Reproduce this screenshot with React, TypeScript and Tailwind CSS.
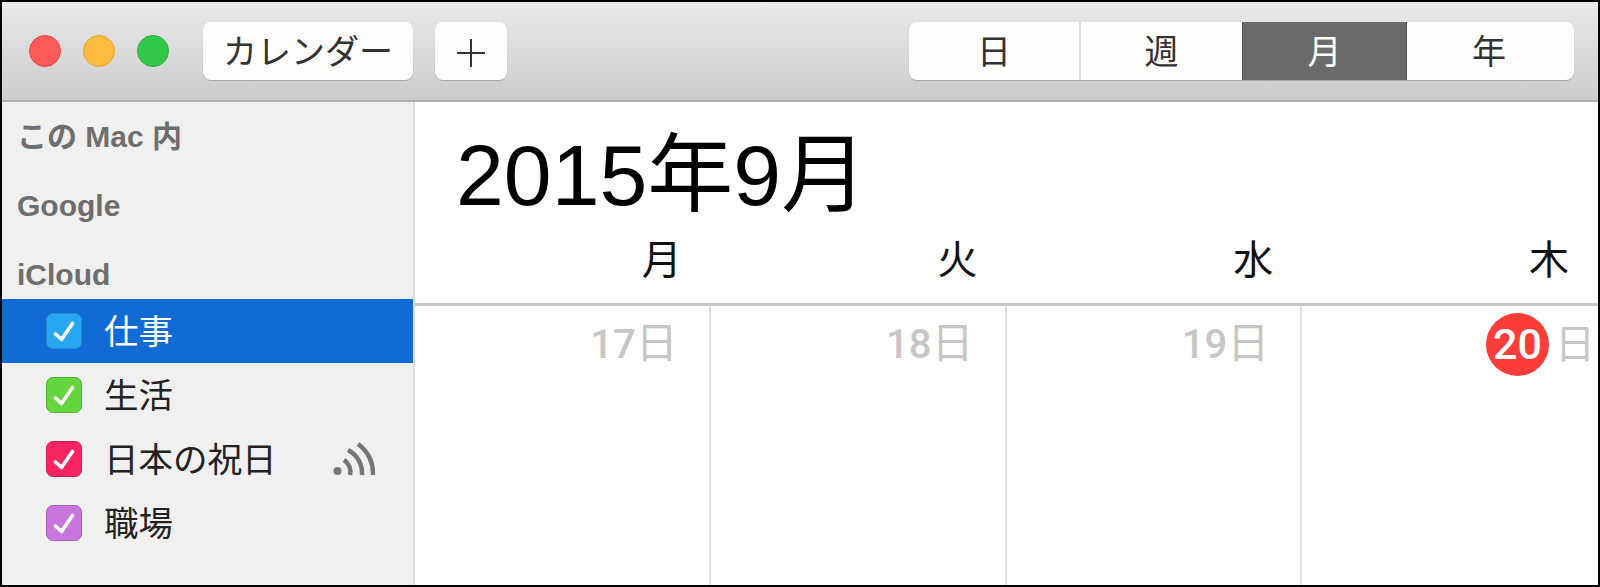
const font = { fontFamily: '"Liberation Sans", "Noto Sans CJK JP", sans-serif' };
const numFont = { fontFamily: 'Roboto, "Liberation Sans", sans-serif' };

const calendars = [
  { name: "仕事", box: "bg-[#27a7f2] border-[#1f8fd6]", selected: true },
  { name: "生活", box: "bg-[#66d640] border-[#4fb32e]" },
  { name: "日本の祝日", box: "bg-[#f92562] border-[#d81e52]", rss: true },
  { name: "職場", box: "bg-[#c876de] border-[#a95fc0]" },
];

const days = [
  { head: "月", num: "17" },
  { head: "火", num: "18" },
  { head: "水", num: "19" },
  { head: "木", num: "20", today: true },
];

function Light({ className }: { className: string }) {
  return <div className={`w-8 h-8 rounded-full border ${className}`} />;
}

function Check() {
  return (
    <svg width="24" height="24" viewBox="0 0 24 24" fill="none" stroke="white" strokeWidth="3.6" strokeLinecap="round" strokeLinejoin="round">
      <polyline points="3.5,15 9.5,20.5 20.5,4.5" />
    </svg>
  );
}

function Rss() {
  return (
    <svg width="42" height="34" viewBox="0 0 42 34" fill="none" stroke="#757575" strokeWidth="4.5">
      <circle cx="4.5" cy="29" r="4" fill="#757575" stroke="none" />
      <path d="M11 18a14 14 0 0 1 6 15" />
      <path d="M15 8a26 26 0 0 1 14 25" />
      <path d="M25 2a36 36 0 0 1 15 31" />
    </svg>
  );
}

export default function App() {
  return (
    <div className="w-[1600px] h-[587px] border-2 border-black flex flex-col overflow-hidden bg-white" style={font}>
      {/* Toolbar */}
      <div className="h-[100px] shrink-0 flex items-start pt-[20px] pl-[27px] pr-[24px] bg-gradient-to-b from-[#e9e9e9] to-[#cccccc] border-b-2 border-[#b0b0b0]">
        <div className="flex gap-[22px] mt-[13px]">
          <Light className="bg-[#fc5b57] border-[#e5443f]" />
          <Light className="bg-[#fdbc40] border-[#e5a52f]" />
          <Light className="bg-[#34c84a] border-[#2aac3c]" />
        </div>
        <button className="ml-[34px] w-[210px] h-[58px] pt-[3px] bg-[#fdfdfd] rounded-lg shadow-[0_1px_1px_rgba(0,0,0,0.2)] text-[34px] text-[#333] flex items-center justify-center">
          カレンダー
        </button>
        <button className="ml-[22px] w-[72px] h-[58px] pt-[3px] bg-[#fdfdfd] rounded-lg shadow-[0_1px_1px_rgba(0,0,0,0.2)] flex items-center justify-center">
          <svg width="30" height="30" viewBox="0 0 30 30" stroke="#333" strokeWidth="2">
            <path d="M15 1v28M1 15h28" />
          </svg>
        </button>
        <div className="ml-auto w-[665px] h-[58px] flex bg-[#fdfdfd] rounded-lg shadow-[0_1px_1px_rgba(0,0,0,0.2)] text-[34px] text-[#333] overflow-hidden">
          <div className="w-[172px] pt-[3px] flex items-center justify-center border-r-2 border-[#dedede]">日</div>
          <div className="w-[161px] pt-[3px] flex items-center justify-center">週</div>
          <div className="w-[165px] pt-[3px] flex items-center justify-center bg-[#6b6b6b] text-white border-x border-[#555]">月</div>
          <div className="flex-1 pt-[3px] pr-[3px] flex items-center justify-center">年</div>
        </div>
      </div>

      <div className="flex-1 flex min-h-0">
        {/* Sidebar */}
        <div className="w-[413px] shrink-0 bg-[#f0f0f0] border-r-2 border-[#dedede] flex flex-col">
          <div className="flex flex-col gap-[39px] pt-[20px] pb-[9px] pl-[15px] text-[30px] leading-[30px] font-bold text-[#6e6e6e]">
            <div>この Mac 内</div>
            <div>Google</div>
            <div>iCloud</div>
          </div>
          {calendars.map((c) => (
            <div
              key={c.name}
              className={`h-16 flex items-center pl-[44px] pr-[38px] text-[34.5px] ${c.selected ? "bg-[#126bd4] text-white" : "text-[#222]"}`}
            >
              <div className={`w-[36px] h-[36px] rounded-[7px] border flex items-center justify-center ${c.box}`}>
                <Check />
              </div>
              <span className="ml-[22px] pt-[4px]">{c.name}</span>
              {c.rss && <span className="ml-auto flex"><Rss /></span>}
            </div>
          ))}
        </div>

        {/* Month view */}
        <div className="flex-1 min-w-0 flex flex-col">
          <div className="h-[102px] shrink-0 pl-[41px] pt-[23px] text-[86px] leading-[100px] text-black">2015年9月</div>
          <div className="h-[102px] shrink-0 grid grid-cols-4 border-b-[3px] border-[#c8c8cc]">
            {days.map((d) => (
              <div key={d.head} className="text-right pr-[29px] pt-[34px] text-[40px] leading-[44px] text-[#111]">
                {d.head}
              </div>
            ))}
          </div>
          <div className="flex-1 grid grid-cols-4">
            {days.map((d) =>
              d.today ? (
                <div key={d.num} className="flex justify-end items-start pt-[7px] pr-[3px] text-[40px] text-[#c6c6c6]">
                  <div className="w-[63px] h-[63px] rounded-full bg-[#fc3d39] text-white font-medium text-[43px] flex items-center justify-center" style={numFont}>
                    {d.num}
                  </div>
                  <span className="ml-[6px] mt-[8px] leading-[46px]">日</span>
                </div>
              ) : (
                <div key={d.num} className="text-right pr-[31px] pt-[15px] text-[42px] leading-[46px] text-[#c6c6c6] border-r-2 border-[#dedede]">
                  <span className="font-medium text-[40px]" style={numFont}>{d.num}</span>
                  <span>日</span>
                </div>
              ),
            )}
          </div>
        </div>
      </div>
    </div>
  );
}
